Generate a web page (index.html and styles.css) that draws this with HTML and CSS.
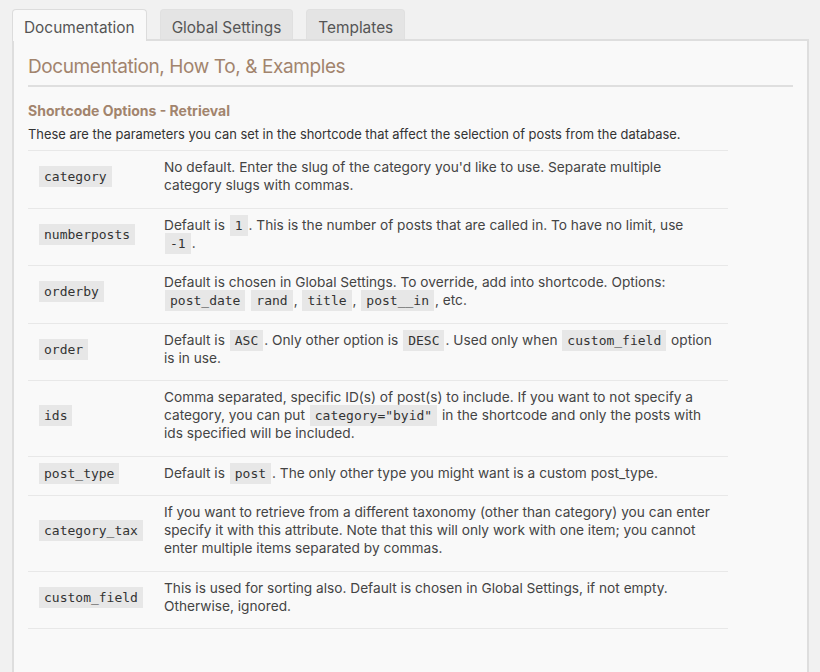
FILE: index.html
```html
<!DOCTYPE html>
<html lang="en">
<head>
<meta charset="utf-8">
<title>Documentation</title>
<link rel="stylesheet" href="styles.css">
</head>
<body>
<div class="wrap">
  <nav class="tabs">
    <a class="tab tab-active" href="#">Documentation</a>
    <a class="tab" href="#">Global Settings</a>
    <a class="tab" href="#">Templates</a>
  </nav>
  <div class="panel">
    <h2 class="panel-title">Documentation, How To, &amp; Examples</h2>
    <h3 class="section-title">Shortcode Options - Retrieval</h3>
    <p class="section-intro">These are the parameters you can set in the shortcode that affect the selection of posts from the database.</p>
    <table class="options">
      <tbody>
        <tr>
          <td class="opt-name"><code>category</code></td>
          <td class="opt-desc">No default. Enter the slug of the category you'd like to use. Separate multiple category slugs with commas.</td>
        </tr>
        <tr>
          <td class="opt-name"><code>numberposts</code></td>
          <td class="opt-desc">Default is <code>1</code>. This is the number of posts that are called in. To have no limit, use <code>-1</code>.</td>
        </tr>
        <tr>
          <td class="opt-name"><code>orderby</code></td>
          <td class="opt-desc">Default is chosen in Global Settings. To override, add into shortcode. Options: <code>post_date</code> <code>rand</code>, <code>title</code>, <code>post__in</code>, etc.</td>
        </tr>
        <tr>
          <td class="opt-name"><code>order</code></td>
          <td class="opt-desc">Default is <code>ASC</code>. Only other option is <code>DESC</code>. Used only when <code>custom_field</code> option is in use.</td>
        </tr>
        <tr>
          <td class="opt-name"><code>ids</code></td>
          <td class="opt-desc">Comma separated, specific ID(s) of post(s) to include. If you want to not specify a category, you can put <code>category="byid"</code> in the shortcode and only the posts with ids specified will be included.</td>
        </tr>
        <tr>
          <td class="opt-name"><code>post_type</code></td>
          <td class="opt-desc">Default is <code>post</code>. The only other type you might want is a custom post_type.</td>
        </tr>
        <tr>
          <td class="opt-name"><code>category_tax</code></td>
          <td class="opt-desc">If you want to retrieve from a different taxonomy (other than category) you can enter specify it with this attribute. Note that this will only work with one item; you cannot enter multiple items separated by commas.</td>
        </tr>
        <tr>
          <td class="opt-name"><code>custom_field</code></td>
          <td class="opt-desc">This is used for sorting also. Default is chosen in Global Settings, if not empty. Otherwise, ignored.</td>
        </tr>
      </tbody>
    </table>
  </div>
</div>
</body>
</html>
```
FILE: styles.css
```css
html, body {
  margin: 0;
  padding: 0;
  background: #f1f1f1;
  height: 100%;
  overflow: hidden;
}

body {
  font-family: Inter, "Noto Sans", "Liberation Sans", sans-serif;
  font-size: 13px;
  color: #444;
}

.wrap {
  padding: 9px 11px 0 12px;
}

/* tab strip */
.tabs {
  display: flex;
  gap: 13px;
  align-items: flex-end;
}

.tab {
  display: block;
  height: 30px;
  box-sizing: border-box;
  padding: 9px 11px 0 11px;
  line-height: 18px;
  font-size: 15.4px;
  color: #555;
  text-decoration: none;
  background: #e4e4e4;
  border: 1px solid #e0e0e0;
  border-bottom: 0;
  border-radius: 4px 4px 0 0;
}

.tab-active {
  background: #f9f9f9;
  border-color: #dcdcdc;
  height: 32px;
  margin-bottom: -2px;
  position: relative;
  z-index: 1;
}

/* content panel */
.panel {
  background: #f9f9f9;
  border: 2px solid #dedede;
  padding: 12px 14px 80px 14px;
}

.panel-title {
  margin: 0;
  padding: 0 0 4px 0;
  font-size: 19px;
  letter-spacing: -0.4px;
  font-weight: 400;
  line-height: 28px;
  color: #a2846d;
  border-bottom: 2px solid #dfdfdf;
}

.section-title {
  margin: 15px 0 0 0;
  font-size: 14px;
  font-weight: 700;
  line-height: 18px;
  color: #a2846d;
}

.section-intro {
  margin: 6px 0 0 0;
  font-size: 12.9px;
  line-height: 18px;
  color: #333;
}

/* options table */
.options {
  width: 700px;
  margin-top: 6px;
  border-collapse: collapse;
  border-bottom: 1px solid #e8e8e8;
  font-size: 13.7px;
}

.options td {
  border-top: 1px solid #e8e8e8;
  padding: 7px 10px 13.5px 10px;
  line-height: 18px;
}

.opt-name {
  width: 106px;
  vertical-align: middle;
}

.opt-desc {
  vertical-align: top;
}

code {
  font-family: "DejaVu Sans Mono", "Liberation Mono", monospace;
  font-size: 13px;
  line-height: 13px;
  padding: 3px 5px 3px 5px;
  margin: 0 1px;
  background: rgba(0, 0, 0, 0.07);
  color: #333;
}
```
